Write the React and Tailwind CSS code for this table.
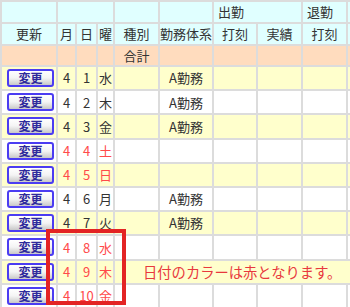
import React from "react";

const rows = [
  { d: 1, w: "水", k: "A勤務", red: false },
  { d: 2, w: "木", k: "A勤務", red: false },
  { d: 3, w: "金", k: "A勤務", red: false },
  { d: 4, w: "土", k: "", red: true },
  { d: 5, w: "日", k: "", red: true },
  { d: 6, w: "月", k: "A勤務", red: false },
  { d: 7, w: "火", k: "A勤務", red: false },
  { d: 8, w: "水", k: "", red: true },
  { d: 9, w: "木", k: "", red: true, note: true },
  { d: 10, w: "金", k: "", red: true },
];

function Cell({ className = "", children }) {
  return (
    <div className={`flex items-center justify-center ${className}`}>{children}</div>
  );
}

export default function App() {
  return (
    <div className="relative w-[350px] h-[307px] overflow-hidden bg-white font-['Noto_Sans_CJK_JP',sans-serif] text-[13px] text-[#333]">
      <div className="grid grid-cols-[54px_17px_19px_15px_43px_52px_42px_43px_43px_1fr] grid-rows-[20px_20px_19px_repeat(10,22.2px)] gap-[2px] bg-[#dcdcdc] pt-[2px] pl-[2px] w-[350px] h-[309px]">
        {/* header row 1 */}
        <Cell className="bg-[#e0ffff]" />
        <Cell className="bg-[#e0ffff] col-span-3" />
        <Cell className="bg-[#e0ffff]" />
        <Cell className="bg-[#e0ffff]" />
        <Cell className="bg-[#e0ffff] col-span-2 !justify-start pl-[4px]">出勤</Cell>
        <Cell className="bg-[#e0ffff] !justify-start pl-[4px]">退勤</Cell>
        <Cell className="bg-[#e0ffff]" />
        {/* header row 2 */}
        <Cell className="bg-[#e0ffff]">更新</Cell>
        <Cell className="bg-[#e0ffff]">月</Cell>
        <Cell className="bg-[#e0ffff]">日</Cell>
        <Cell className="bg-[#e0ffff]">曜</Cell>
        <Cell className="bg-[#e0ffff]">種別</Cell>
        <Cell className="bg-[#e0ffff]">勤務体系</Cell>
        <Cell className="bg-[#e0ffff]">打刻</Cell>
        <Cell className="bg-[#e0ffff]">実績</Cell>
        <Cell className="bg-[#e0ffff]">打刻</Cell>
        <Cell className="bg-[#e0ffff]" />
        {/* total row */}
        <Cell className="bg-[#ffdcbe]" />
        <Cell className="bg-[#ffdcbe]" />
        <Cell className="bg-[#ffdcbe]" />
        <Cell className="bg-[#ffdcbe]" />
        <Cell className="bg-[#ffdcbe]">合計</Cell>
        <Cell className="bg-[#ffdcbe]" />
        <Cell className="bg-[#ffdcbe]" />
        <Cell className="bg-[#ffdcbe]" />
        <Cell className="bg-[#ffdcbe]" />
        <Cell className="bg-[#ffdcbe]" />
        {rows.map((r, i) => {
          const bg = i % 2 === 0 ? "bg-[#ffffcc]" : "bg-white";
          const tc = r.red ? "text-[#ff4a4a]" : "";
          return (
            <React.Fragment key={r.d}>
              <div className={`flex items-center pl-[5px] ${bg}`}>
                <button className="w-[47px] h-[18px] flex items-center justify-center border-2 border-[#4b3cf2] rounded-[3px] bg-linear-to-b from-white via-[#f4f4f4] to-[#c8c8c8] text-[12px] font-bold text-[#2f2a9c] leading-none">
                  変更
                </button>
              </div>
              <Cell className={`${bg} ${tc}`}>4</Cell>
              <Cell className={`${bg} ${tc}`}>{r.d}</Cell>
              <Cell className={`${bg} ${tc}`}>{r.w}</Cell>
              {r.note ? (
                <div className={`col-span-6 flex items-center pl-[28px] ${bg} text-[14.3px] text-[#e8383d] whitespace-nowrap`}>
                  日付のカラーは赤となります。
                </div>
              ) : (
                <>
                  <Cell className={bg} />
                  <Cell className={bg}>{r.k}</Cell>
                  <Cell className={bg} />
                  <Cell className={bg} />
                  <Cell className={bg} />
                  <Cell className={bg} />
                </>
              )}
            </React.Fragment>
          );
        })}
      </div>
      <div className="absolute left-[46px] top-[229px] w-[80px] h-[76px] border-4 border-[#e32424] pointer-events-none" />
    </div>
  );
}
